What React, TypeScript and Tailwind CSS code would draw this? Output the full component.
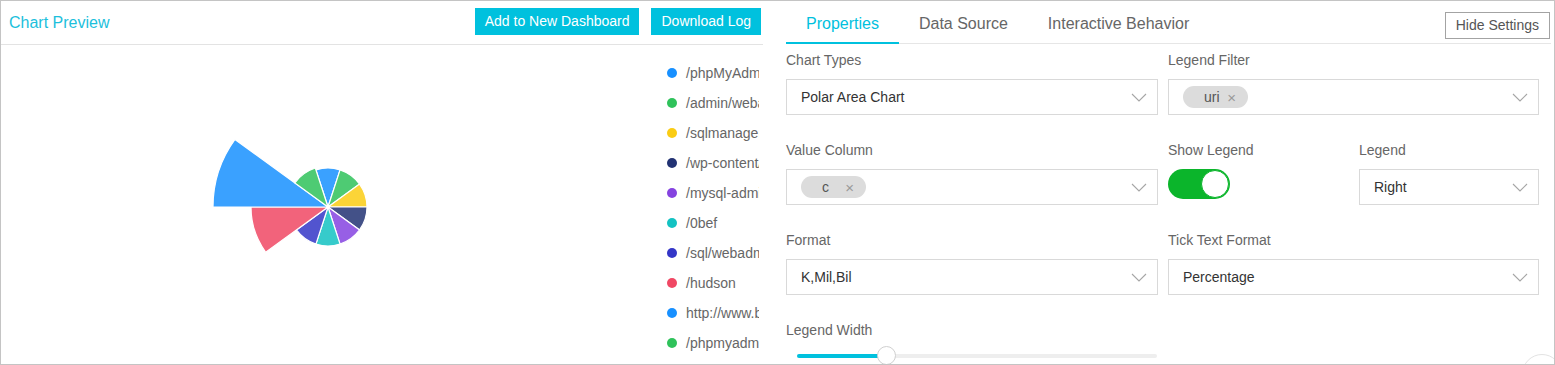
import React from 'react';

const legendItems = [
  { label: '/phpMyAdmin/', color: '#1890ff', r: 39 },
  { label: '/admin/webadmin', color: '#2fc25b', r: 39 },
  { label: '/sqlmanager/', color: '#facc14', r: 39 },
  { label: '/wp-content/', color: '#223273', r: 39 },
  { label: '/mysql-admin/', color: '#8543e0', r: 39 },
  { label: '/0bef', color: '#13c2c2', r: 39 },
  { label: '/sql/webadmin/', color: '#3436c7', r: 39 },
  { label: '/hudson', color: '#f04864', r: 77 },
  { label: 'http://www.baidu.com', color: '#1890ff', r: 115 },
  { label: '/phpmyadmin/', color: '#2fc25b', r: 41 },
];

const Chevron = () => (
  <svg width="16" height="9" viewBox="0 0 16 9" className="shrink-0">
    <polyline points="1,1 8,8 15,1" fill="none" stroke="#a6a6a6" strokeWidth="1.1" />
  </svg>
);

const Select: React.FC<{ children?: React.ReactNode }> = ({ children }) => (
  <div className="flex h-[36px] items-center justify-between border border-[#d9d9d9] bg-white pl-[14px] pr-[10px] text-[14px] text-[#333]">
    <div className="flex items-center">{children}</div>
    <Chevron />
  </div>
);

const Chip: React.FC<{ text: string }> = ({ text }) => (
  <span className="flex h-[22px] w-[65px] items-center rounded-full bg-[#dcdcdc] pl-[21px] text-[14px] text-[#555]">
    <span>{text}</span>
    <span className="ml-auto mr-[12px] text-[15px] leading-none text-[#999]">×</span>
  </span>
);

const Label: React.FC<{ children: React.ReactNode }> = ({ children }) => (
  <div className="h-[20px] text-[14px] leading-[20px] text-[#666]">{children}</div>
);

const PolarChart = () => {
  const cx = 327;
  const cy = 162;
  const rad = (d: number) => (d * Math.PI) / 180;
  return (
    <svg width="665" height="318" className="block shrink-0">
      {legendItems.map((it, i) => {
        const a0 = rad(252 + 36 * i);
        const a1 = rad(288 + 36 * i);
        const x0 = cx + it.r * Math.cos(a0);
        const y0 = cy + it.r * Math.sin(a0);
        const x1 = cx + it.r * Math.cos(a1);
        const y1 = cy + it.r * Math.sin(a1);
        return (
          <path
            key={i}
            d={`M${cx},${cy} L${x0},${y0} A${it.r},${it.r} 0 0 1 ${x1},${y1} Z`}
            fill={it.color}
            fillOpacity={0.85}
            stroke="#fff"
            strokeWidth={1.2}
          />
        );
      })}
    </svg>
  );
};

const App: React.FC = () => {
  return (
    <div className="relative flex h-[365px] w-[1555px] overflow-hidden border border-[#c4c4c4] bg-white font-['Liberation_Sans',Arial,sans-serif]">
      {/* preview panel */}
      <div className="flex w-[762px] shrink-0 flex-col">
        <div className="flex h-[44px] shrink-0 items-center border-b border-[#e3e3e3] pl-[8px] pr-[2px]">
          <span className="text-[16px] text-[#1cc0dc]">Chart Preview</span>
          <div className="ml-auto flex gap-[12px] pb-[2px]">
            <button className="h-[27px] bg-[#00c1de] px-[10px] text-[14px] text-white">Add to New Dashboard</button>
            <button className="h-[27px] bg-[#00c1de] px-[10px] text-[14px] text-white">Download Log</button>
          </div>
        </div>
        <div className="flex flex-1">
          <PolarChart />
          <div className="w-[93px] overflow-hidden pt-[18px]">
            {legendItems.map((it, i) => (
              <div key={i} className="flex h-[30px] items-start whitespace-nowrap text-[14px] leading-[20px] text-[#666]">
                <span className="ml-[1px] mr-[9px] mt-[5px] h-[10px] w-[10px] shrink-0 rounded-full" style={{ backgroundColor: it.color }} />
                <span>{it.label}</span>
              </div>
            ))}
          </div>
        </div>
      </div>

      {/* settings panel */}
      <div className="flex flex-1 flex-col pl-[23px] pr-[3px]">
        <div className="flex h-[43px] shrink-0 border-b border-[#e6e6e6]">
          <div className="-mb-[1px] flex items-center border-b-2 border-[#00c1de] px-[20px] pt-[4px] text-[16px] text-[#00c1de]">Properties</div>
          <div className="flex items-center px-[20px] pt-[4px] text-[16px] text-[#666]">Data Source</div>
          <div className="flex items-center px-[20px] pt-[4px] text-[16px] text-[#666]">Interactive Behavior</div>
          <button className="ml-auto mr-[1px] mt-[11px] h-[27px] self-start border border-[#a3a3a3] px-[10px] text-[14px] text-[#555]">Hide Settings</button>
        </div>

        <div className="grid grid-cols-[372px_371px] gap-x-[10px] pt-[6px]">
          <div className="h-[90px]">
            <Label>Chart Types</Label>
            <div className="mt-[9px]">
              <Select>Polar Area Chart</Select>
            </div>
          </div>
          <div className="h-[90px]">
            <Label>Legend Filter</Label>
            <div className="mt-[9px]">
              <Select><Chip text="uri" /></Select>
            </div>
          </div>

          <div className="h-[90px]">
            <Label>Value Column</Label>
            <div className="mt-[9px]">
              <Select><Chip text="c" /></Select>
            </div>
          </div>
          <div className="grid h-[90px] grid-cols-[180px_180px] gap-x-[11px]">
            <div>
              <Label>Show Legend</Label>
              <div className="mt-[9px] flex h-[30px] w-[62px] items-center justify-end rounded-full bg-[#0bb52b] pr-[1px]">
                <span className="h-[28px] w-[28px] rounded-full border border-[#0bb52b] bg-white" />
              </div>
            </div>
            <div>
              <Label>Legend</Label>
              <div className="mt-[9px]">
                <Select>Right</Select>
              </div>
            </div>
          </div>

          <div className="h-[90px]">
            <Label>Format</Label>
            <div className="mt-[9px]">
              <Select>K,Mil,Bil</Select>
            </div>
          </div>
          <div className="h-[90px]">
            <Label>Tick Text Format</Label>
            <div className="mt-[9px]">
              <Select>Percentage</Select>
            </div>
          </div>

          <div>
            <Label>Legend Width</Label>
            <div className="relative ml-[11px] mt-[14px] h-[4px] w-[360px] rounded-full bg-[#eeeeee]">
              <div className="h-[4px] w-[89px] rounded-full bg-[#00c1de]" />
              <span className="absolute left-[80px] top-[-8px] h-[19px] w-[19px] rounded-full border border-[#d0d0d0] bg-white" />
            </div>
          </div>
        </div>
      </div>

      <span className="absolute bottom-[-30px] right-[-8px] h-[40px] w-[40px] rounded-full border border-[#e3e3e3] bg-white" />
    </div>
  );
};

export default App;
